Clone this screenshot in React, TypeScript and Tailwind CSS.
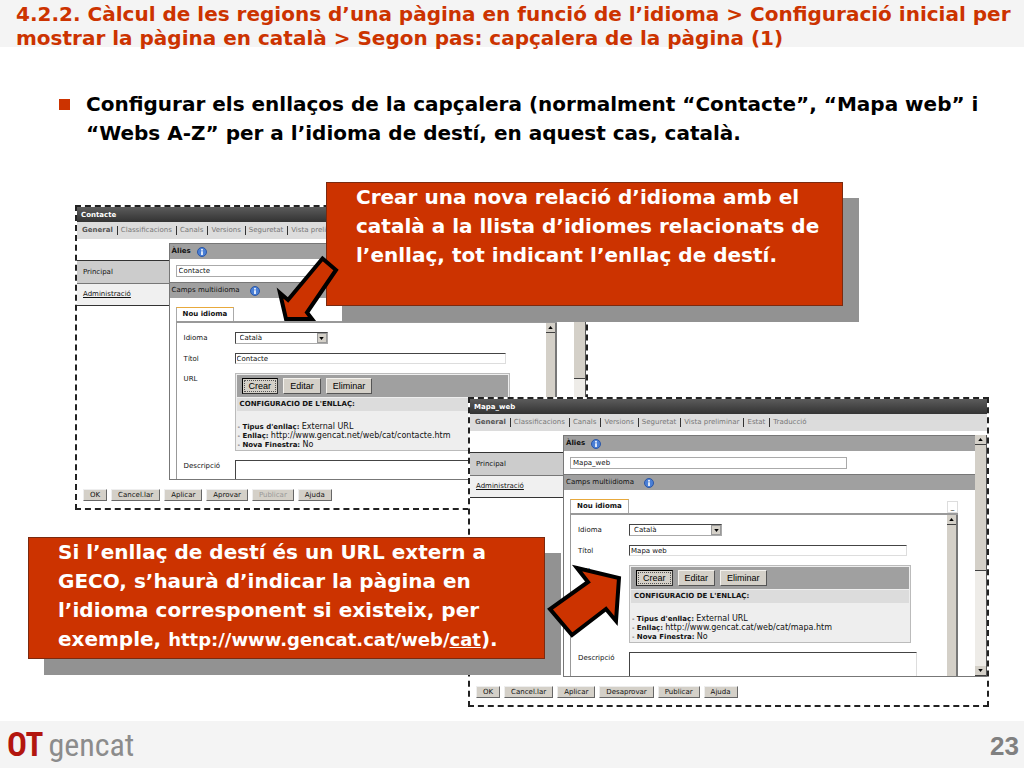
import { useId } from "react";
import clsx from "clsx";

type EditorWindowProps = {
  title: string;
  linkUrl: string;
  tabs: string[];
  actions: { label: string; disabled?: boolean }[];
  className?: string;
};

const TABS = ["General", "Classificacions", "Canals", "Versions", "Seguretat", "Vista preliminar"];

const InfoIcon = () => (
  <svg viewBox="0 0 20 20" className="size-[10px]" aria-hidden="true">
    <circle cx="10" cy="10" r="9" fill="#4a7fd6" stroke="#2c57a5" strokeWidth="2" />
    <circle cx="10" cy="5.5" r="1.8" fill="#fff" />
    <rect x="8.4" y="8.5" width="3.2" height="7.5" fill="#fff" />
  </svg>
);

const ScrollArrow = ({ down }: { down?: boolean }) => (
  <span className="flex h-[10px] shrink-0 items-center justify-center border-b border-[#404040] bg-[#d4d0c8]">
    <svg viewBox="0 0 6 4" className={clsx("h-[3px] w-[5px]", down && "rotate-180")}>
      <path d="M0 4 L3 0 L6 4 Z" fill="#000" />
    </svg>
  </span>
);

const SectionBar = ({ children }: { children: React.ReactNode }) => (
  <div className="flex h-4 shrink-0 items-center gap-[6px] border-t border-[#777] bg-[#a0a0a0] pl-[2px]">
    {children}
    <InfoIcon />
  </div>
);

const toolButton =
  "h-4 border border-[#f4f2ee] border-r-[#555] border-b-[#555] bg-[#d4d0c8] px-[6px] font-['Liberation_Sans',sans-serif] text-[9px] leading-3 text-black";

function EditorWindow({ title, linkUrl, tabs, actions, className }: EditorWindowProps) {
  const id = useId();

  return (
    <section
      className={clsx(
        "absolute flex flex-col border-2 border-dashed border-[#222] bg-white text-[7px] leading-[9px] text-[#111]",
        className
      )}
    >
      <h2 className="flex h-[15px] shrink-0 items-center bg-linear-to-b from-[#5c5c5c] to-[#333] pt-px pl-1 font-bold text-white">
        {title}
      </h2>
      <nav className="flex h-[17px] shrink-0 items-center bg-[#dcdcdc] pl-[5px] text-[#777]">
        {tabs.map((tab, i) => (
          <a
            key={tab}
            href="#"
            className={clsx(
              "whitespace-nowrap",
              i === 0 ? "pr-1 font-bold text-[#555]" : "border-l border-[#333] pr-1 pl-[3px]"
            )}
          >
            {tab}
          </a>
        ))}
      </nav>

      <div className="mt-1 flex min-h-0 flex-1">
        <aside className="w-[18%] shrink-0 pt-[17px]">
          <a href="#" className="flex h-[23px] items-center border-t border-[#333] bg-[#ccc] pl-[6px]">
            Principal
          </a>
          <a
            href="#"
            className="flex h-[23px] items-center border-y border-t-[#777] border-b-[#333] bg-[#f0f0f0] pl-[6px] underline"
          >
            Administració
          </a>
        </aside>

        <div className="flex min-w-0 flex-1 border-b border-l border-[#777]">
          <div className="flex min-w-0 flex-1 flex-col">
            <SectionBar>
              <label htmlFor={`${id}-alias`} className="font-bold">
                Àlies
              </label>
            </SectionBar>
            <div className="h-[23px] shrink-0 pt-[6px] pl-[6px]">
              <input
                id={`${id}-alias`}
                defaultValue={title}
                className="block h-3 w-[277px] border border-[#aaa] bg-white pl-[2px]"
              />
            </div>
            <SectionBar>
              <span className="pr-1">Camps multiidioma</span>
            </SectionBar>

            <div className="mt-[9px] mr-[17px] ml-[6px] flex min-h-0 flex-1 flex-col">
              <div className="flex shrink-0 items-end justify-between">
                <button className="h-[14px] border border-b-0 border-[#aaa] border-t-[#e8a93c] bg-white px-[6px] font-bold">
                  Nou idioma
                </button>
                <button className="h-3 w-[11px] border border-[#ddd] leading-[8px]" aria-label="Minimitzar">
                  _
                </button>
              </div>
              <div className="flex min-h-0 flex-1 border-t-2 border-l border-[#999]">
                <div className="grid min-w-0 flex-1 grid-cols-[51px_1fr] content-start gap-y-[9px] overflow-hidden pt-[9px] pl-[7px]">
                  <label htmlFor={`${id}-lang`} className="pt-[2px]">
                    Idioma
                  </label>
                  <div className="relative w-[93px]">
                    <select
                      id={`${id}-lang`}
                      className="block h-3 w-full appearance-none border border-[#aaa] border-t-[#444] border-l-[#444] bg-white pl-1"
                    >
                      <option>Català</option>
                    </select>
                    <span className="pointer-events-none absolute top-px right-px flex h-[10px] w-[10px] items-center justify-center border border-[#999] bg-[#d4d0c8]">
                      <svg viewBox="0 0 6 4" className="h-[3px] w-[5px]">
                        <path d="M0 0 L3 4 L6 0 Z" fill="#000" />
                      </svg>
                    </span>
                  </div>

                  <label htmlFor={`${id}-title`} className="pt-[2px]">
                    Títol
                  </label>
                  <div className="pr-10">
                    <input
                      id={`${id}-title`}
                      defaultValue={title.replace("_", " ")}
                      className="block h-[11px] w-full border border-[#ddd] border-t-[#444] border-l-[#444] pl-px"
                    />
                  </div>

                  <span className="pt-[2px]">URL</span>
                  <div className="mr-9 border border-[#bbb] bg-[#eee] p-px">
                    <div className="flex h-[22px] items-center gap-[5px] bg-[#a0a0a0] pl-[5px]">
                      <button className="h-4 border border-black border-r-[#333] border-b-[#333] bg-[#d4d0c8] p-px font-['Liberation_Sans',sans-serif] text-[9px] leading-[10px] text-black">
                        <span className="block border border-dotted border-[#555] px-[4px]">Crear</span>
                      </button>
                      <button className={toolButton}>Editar</button>
                      <button className={toolButton}>Eliminar</button>
                    </div>
                    <p className="mt-px bg-[#dcdcdc] py-[2px] pl-[3px] font-bold">CONFIGURACIO DE L'ENLLAÇ:</p>
                    <ul className="pt-[11px] pl-px">
                      <li className="h-[9px]">
                        - <b>Tipus d'enllaç:</b> <span className="text-[8px]">External URL</span>
                      </li>
                      <li className="h-[9px]">
                        - <b>Enllaç:</b> <span className="text-[8px]">{linkUrl}</span>
                      </li>
                      <li className="h-[9px]">
                        - <b>Nova Finestra:</b> <span className="text-[8px]">No</span>
                      </li>
                    </ul>
                  </div>

                  <label htmlFor={`${id}-desc`} className="pt-[2px]">
                    Descripció
                  </label>
                  <div className="pr-[30px]">
                    <textarea
                      id={`${id}-desc`}
                      className="block h-8 w-full resize-none border border-[#ddd] border-t-[#444] border-l-[#444]"
                    />
                  </div>
                </div>
                <div className="flex w-[11px] shrink-0 flex-col border-r-2 border-[#777] bg-[#d4d0c8]">
                  <ScrollArrow />
                </div>
              </div>
            </div>
          </div>

          <div className="flex w-3 shrink-0 flex-col border-r border-[#555] bg-[#eeece8]">
            <ScrollArrow />
            <span className="h-[126px] border-b border-[#404040] bg-[#d4d0c8]" />
            <span className="flex-1" />
            <ScrollArrow down />
          </div>
        </div>
      </div>

      <div className="flex shrink-0 gap-1 px-[6px] pt-[9px] pb-[7px]">
        {actions.map(({ label, disabled }) => (
          <button
            key={label}
            disabled={disabled}
            className="h-3 border border-[#eee] border-r-[#666] border-b-[#666] bg-[#d4d0c8] px-[6px] leading-[9px] disabled:text-[#999]"
          >
            {label}
          </button>
        ))}
      </div>
    </section>
  );
}

const Callout = ({ className, children }: { className?: string; children: React.ReactNode }) => (
  <p
    className={clsx(
      "absolute border border-[#7a2a10] bg-[#cc3300] pl-[29px] text-[20px] leading-[29px] font-bold whitespace-nowrap text-white shadow-[16px_16px_0_#929292]",
      className
    )}
  >
    {children}
  </p>
);

export default function App() {
  return (
    <div className="flex min-h-screen flex-col bg-white font-['DejaVu_Sans',sans-serif]">
      <header className="h-[47px] bg-[#f4f4f4] pt-[2px] pl-4">
        <h1 className="text-[20px] leading-6 font-bold whitespace-nowrap text-[#cc3300]">
          4.2.2. Càlcul de les regions d’una pàgina en funció de l’idioma &gt; Configuració inicial per
          <br />
          mostrar la pàgina en català &gt; Segon pas: capçalera de la pàgina (1)
        </h1>
      </header>

      <main className="flex flex-1 flex-col pt-[43px]">
        <ul className="pl-[59px]">
          <li className="flex gap-4 text-[20px] leading-[29px] font-bold whitespace-nowrap text-black">
            <span className="mt-[9px] size-[11px] bg-[#cc3300]" />
            <span>
              Configurar els enllaços de la capçalera (normalment “Contacte”, “Mapa web” i
              <br />
              “Webs A-Z” per a l’idioma de destí, en aquest cas, català.
            </span>
          </li>
        </ul>

        {/* overlapping windows, callouts and arrows */}
        <div className="relative min-h-[573px] flex-1">
          <EditorWindow
            title="Contacte"
            linkUrl="http://www.gencat.net/web/cat/contacte.htm"
            tabs={TABS}
            actions={[
              { label: "OK" },
              { label: "Cancel.lar" },
              { label: "Aplicar" },
              { label: "Aprovar" },
              { label: "Publicar", disabled: true },
              { label: "Ajuda" },
            ]}
            className="top-[57px] left-[75px] h-[305px] w-[513px]"
          />
          <Callout className="top-[34px] left-[326px] h-[124px] w-[517px]">
            Crear una nova relació d’idioma amb el
            <br />
            català a la llista d’idiomes relacionats de
            <br />
            l’enllaç, tot indicant l’enllaç de destí.
          </Callout>
          <EditorWindow
            title="Mapa_web"
            linkUrl="http://www.gencat.cat/web/cat/mapa.htm"
            tabs={[...TABS, "Estat", "Traducció"]}
            actions={[
              { label: "OK" },
              { label: "Cancel.lar" },
              { label: "Aplicar" },
              { label: "Desaprovar" },
              { label: "Publicar" },
              { label: "Ajuda" },
            ]}
            className="top-[249px] left-[468px] h-[310px] w-[521px]"
          />
          <Callout className="top-[389px] left-[28px] h-[122px] w-[517px]">
            Si l’enllaç de destí és un URL extern a
            <br />
            GECO, s’haurà d’indicar la pàgina en
            <br />
            l’idioma corresponent si existeix, per
            <br />
            exemple,{" "}
            <span className="text-[18px]">
              http://www.gencat.cat/web/<u>cat</u>
            </span>
            ).
          </Callout>

          <svg className="absolute top-[104px] left-[274px] h-[72px] w-[68px]" viewBox="0 0 68 72">
            <path
              d="M48.500 6.500 L62 18 L33 60.500 L38 67 L12 67 L6 41 L14 48 Z"
              fill="#cc3300"
              stroke="#000"
              strokeWidth="4"
            />
          </svg>
          <svg className="absolute top-[410px] left-[544px] h-[84px] w-[80px]" viewBox="0 0 80 84">
            <path
              d="M33 10 L75 20 L72 63 L62 51 L28 77 L6 51 L44 24 Z"
              fill="#cc3300"
              stroke="#000"
              strokeWidth="4"
            />
          </svg>
        </div>
      </main>

      <footer className="flex h-[47px] items-center justify-between bg-[#f4f4f4] pr-[5px] pl-[7px]">
        <a
          href="#"
          className="flex items-baseline gap-[5px] font-['Roboto_Condensed','Liberation_Sans_Narrow','Liberation_Sans',sans-serif]"
        >
          <span className="text-[33px] font-bold text-[#b3160f]">OT</span>
          <span className="text-[32px] text-[#8c8c8c]">gencat</span>
        </a>
        <span className="pt-1 font-['Liberation_Sans',sans-serif] text-[26px] font-bold text-[#808080]">23</span>
      </footer>
    </div>
  );
}
